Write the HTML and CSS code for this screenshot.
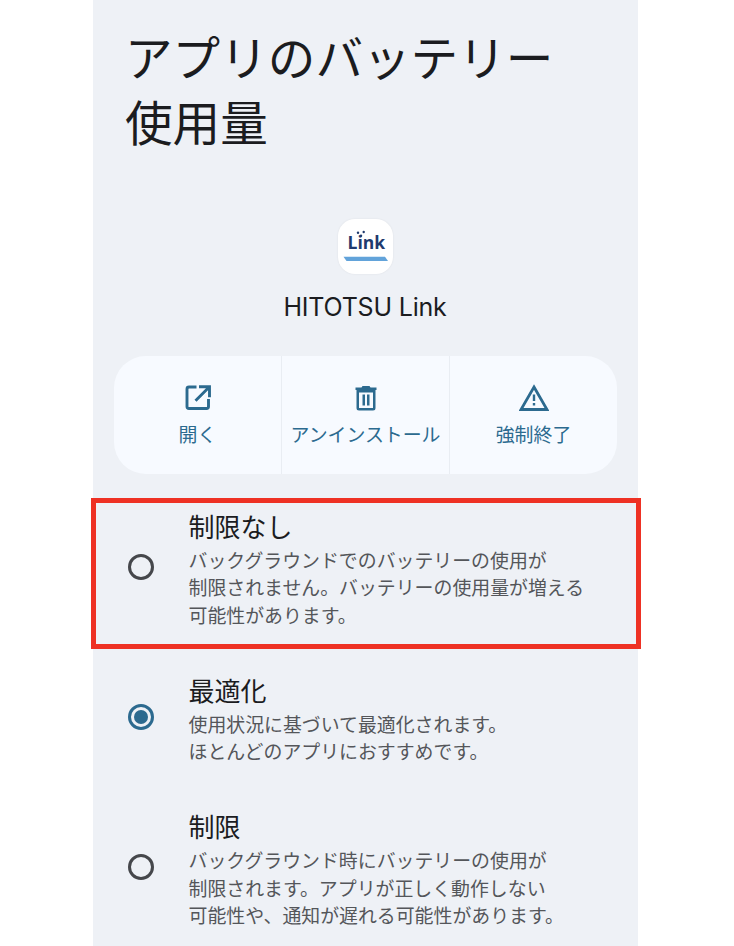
FILE: index.html
```html
<!DOCTYPE html>
<html lang="ja">
<head>
<meta charset="utf-8">
<title>アプリのバッテリー使用量</title>
<link rel="stylesheet" href="styles.css">
</head>
<body>
<main class="screen">
  <h1 class="title">アプリのバッテリー<br>使用量</h1>
  <section class="app">
    <div class="app-icon">
      <svg width="55" height="55" viewBox="0 0 55 55">
        <text x="9.500" y="30" class="logo-text">Link</text>
        <circle cx="20" cy="13.700" r="1.200" fill="#1f3a6e"/>
        <circle cx="25.700" cy="13" r="1.200" fill="#1f3a6e"/>
        <circle cx="23" cy="16.800" r="1.200" fill="#1f3a6e"/>
        <path d="M5.500 37.700H47L50 42H8.500Z" fill="#62a3da"/>
      </svg>
    </div>
    <div class="app-name">HITOTSU Link</div>
  </section>
  <section class="actions">
    <div class="action">
      <svg class="action-icon" width="28" height="28" viewBox="0 0 28 28"><path d="M12.500 3H5a2 2 0 0 0-2 2v17.500a2 2 0 0 0 2 2h17.500a2 2 0 0 0 2-2V15M15 2.800H25.500V13.300M25 3.300 11.500 16.800" fill="none" stroke="#2c6a8f" stroke-width="2.900"/></svg>
      <span class="action-label">開く</span>
    </div>
    <div class="action">
      <svg class="action-icon" width="28" height="28" viewBox="0 0 28 28"><path d="M10.500 2h7l1 1.500H24.500V6H3.500V3.500h6ZM4.500 6H23.500V24a2.500 2.500 0 0 1-2.500 2.500H7A2.500 2.500 0 0 1 4.500 24ZM7 8.500V24H21V8.500ZM10.500 10.500H13V21.500H10.500ZM15 10.500h2.500V21.500H15Z" fill="#2c6a8f" fill-rule="evenodd"/></svg>
      <span class="action-label">アンインストール</span>
    </div>
    <div class="action">
      <svg class="action-icon" width="30" height="28" viewBox="0 0 30 28"><path d="M15 3 28 25.500H2Z" fill="none" stroke="#2c6a8f" stroke-width="2.800"/><path d="M13.800 10.500h2.400V17h-2.400ZM13.800 19h2.400v2.400h-2.400Z" fill="#2c6a8f"/></svg>
      <span class="action-label">強制終了</span>
    </div>
  </section>
  <section class="options">
    <div class="option">
      <span class="radio"></span>
      <div class="option-body">
        <div class="option-title">制限なし</div>
        <p class="option-desc">バックグラウンドでのバッテリーの使用が<br>制限されません。バッテリーの使用量が増える<br>可能性があります。</p>
      </div>
    </div>
    <div class="option">
      <span class="radio radio-on"></span>
      <div class="option-body">
        <div class="option-title">最適化</div>
        <p class="option-desc">使用状況に基づいて最適化されます。<br>ほとんどのアプリにおすすめです。</p>
      </div>
    </div>
    <div class="option">
      <span class="radio"></span>
      <div class="option-body">
        <div class="option-title">制限</div>
        <p class="option-desc">バックグラウンド時にバッテリーの使用が<br>制限されます。アプリが正しく動作しない<br>可能性や、通知が遅れる可能性があります。</p>
      </div>
    </div>
  </section>
  <div class="highlight"></div>
</main>
</body>
</html>
```
FILE: styles.css
```css
* { box-sizing: border-box; }
html, body { margin: 0; padding: 0; background: #fff; }
body { height: 946px; overflow: hidden; font-family: "Noto Sans CJK JP", "Noto Sans", sans-serif; }
.screen { position: relative; width: 545px; height: 946px; margin-left: 93px; background: #eef1f6; padding-top: 23px; }
.title { margin: 0; padding-left: 32px; font-size: 47.600px; line-height: 65px; font-weight: 400; color: #1b1c1f; }
.app { display: flex; flex-direction: column; align-items: center; margin-top: 66px; padding-right: 1px; }
.app-icon { width: 55px; height: 55px; border-radius: 17px; background: #fff; box-shadow: 0 0 2px rgba(0,0,0,.08); }
.logo-text { font-family: "Open Sans", sans-serif; font-weight: 700; font-size: 17.500px; fill: #1f3a6e; }
.app-name { margin-top: 14px; font-family: Inter, sans-serif; font-size: 25px; line-height: 38px; color: #1b1c1f; letter-spacing: -.2px; }
.actions { display: flex; margin: 30px 21px 0; height: 118px; border-radius: 32px; background: #f7faff; overflow: hidden; }
.action { flex: 1; display: flex; flex-direction: column; align-items: center; padding-top: 28px; border-left: 1px solid #e9edf3; }
.action:first-child { border-left: 0; }
.action-icon { display: block; }
.action-label { margin-top: 8px; font-size: 18.900px; line-height: 28px; color: #2c6a8f; white-space: nowrap; }
.options { display: flex; flex-direction: column; margin-top: 30.500px; }
.option { display: flex; align-items: center; padding-left: 35px; margin-bottom: 40.500px; }
.radio { flex: none; width: 26px; height: 26px; border-radius: 50%; border: 3px solid #45474b; margin-top: 1px; position: relative; }
.radio-on { border-color: #2c6a8f; }
.radio-on::after { content: ""; position: absolute; left: 3px; top: 3px; width: 14px; height: 14px; border-radius: 50%; background: #2c6a8f; }
.option-body { margin-left: 34.500px; }
.option-title { font-size: 26px; line-height: 41px; color: #1b1c1f; }
.option-desc { margin: 0; font-size: 18.900px; line-height: 27.500px; color: #54565a; white-space: nowrap; }
.highlight { position: absolute; left: -2px; top: 498px; width: 550px; height: 151px; border: 5px solid #ee3124; }
```
